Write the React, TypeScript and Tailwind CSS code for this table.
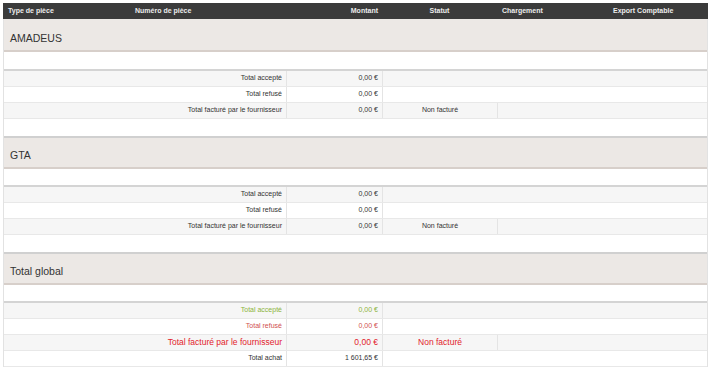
import React from 'react';

type Row = { label: string; value: string; statut?: string; tone?: 'green' | 'red' | 'alert' };

const sections: { title: string; rows: Row[]; tail?: boolean }[] = [
    {
        title: 'AMADEUS',
        rows: [
            { label: 'Total accepté', value: '0,00 €' },
            { label: 'Total refusé', value: '0,00 €' },
            { label: 'Total facturé par le fournisseur', value: '0,00 €', statut: 'Non facturé' },
        ],
        tail: true,
    },
    {
        title: 'GTA',
        rows: [
            { label: 'Total accepté', value: '0,00 €' },
            { label: 'Total refusé', value: '0,00 €' },
            { label: 'Total facturé par le fournisseur', value: '0,00 €', statut: 'Non facturé' },
        ],
        tail: true,
    },
    {
        title: 'Total global',
        rows: [
            { label: 'Total accepté', value: '0,00 €', tone: 'green' },
            { label: 'Total refusé', value: '0,00 €', tone: 'red' },
            { label: 'Total facturé par le fournisseur', value: '0,00 €', statut: 'Non facturé', tone: 'alert' },
            { label: 'Total achat', value: '1 601,65 €' },
        ],
    },
];

function toneClass(tone?: Row['tone']) {
    if (tone === 'green') return 'text-[#8cb43c]';
    if (tone === 'red') return 'text-[#d0504f]';
    if (tone === 'alert') return 'text-[#e2222b] text-[8.5px]';
    return 'text-[#333]';
}

export default function App() {
    return (
        <div className="w-[712px] h-[372px] bg-white pt-[3px] pl-[3px] font-['Liberation_Sans',Arial,sans-serif]">
            <div className="w-[705px] border-x border-[#e2e2e2]">
                <div className="grid grid-cols-[128px_155px_96px_115px_113px_98px] h-[16px] bg-[#3b3b3b] text-[7px] font-bold text-[#ececec] items-center -mx-px">
                    <div className="pl-[5px]">Type de pièce</div>
                    <div className="pl-[4px]">Numéro de pièce</div>
                    <div className="text-right pr-[4px]">Montant</div>
                    <div className="text-center">Statut</div>
                    <div className="pl-[5px]">Chargement</div>
                    <div className="pl-[3px]">Export Comptable</div>
                </div>

                {sections.map((s, si) => (
                    <div key={s.title}>
                        <div className={`bg-[#ece8e5] border-b-2 border-[#d7cfca] flex items-end pb-[3px] pl-[6px] text-[10.5px] text-[#333] ${si > 0 ? 'border-t-2 border-t-[#d0d0d0] h-[33px]' : 'h-[33px]'}`}>
                            {s.title}
                        </div>
                        <div className={`${si > 0 ? 'h-[18px]' : 'h-[19px]'} bg-white border-b-2 border-[#d4d4d4]`} />
                        {s.rows.map((r, ri) => (
                            <div
                                key={r.label}
                                className={`grid grid-cols-[283px_96px_115px_209px] h-[16px] border-b border-[#e8e8e8] text-[7px] ${ri % 2 === 0 ? 'bg-[#f6f6f6]' : 'bg-white'} ${toneClass(r.tone)}`}
                            >
                                <div className="flex items-center justify-end pr-[4px] border-r border-[#e4e4e4]">{r.label}</div>
                                <div className="flex items-center justify-end pr-[4px] border-r border-[#e4e4e4]">{r.value}</div>
                                {r.statut ? (
                                    <>
                                        <div className="flex items-center justify-center border-r border-[#e4e4e4]">{r.statut}</div>
                                        <div />
                                    </>
                                ) : (
                                    <div className="col-span-2" />
                                )}
                            </div>
                        ))}
                        {s.tail && <div className="h-[17px] bg-white" />}
                    </div>
                ))}
            </div>
        </div>
    );
}
